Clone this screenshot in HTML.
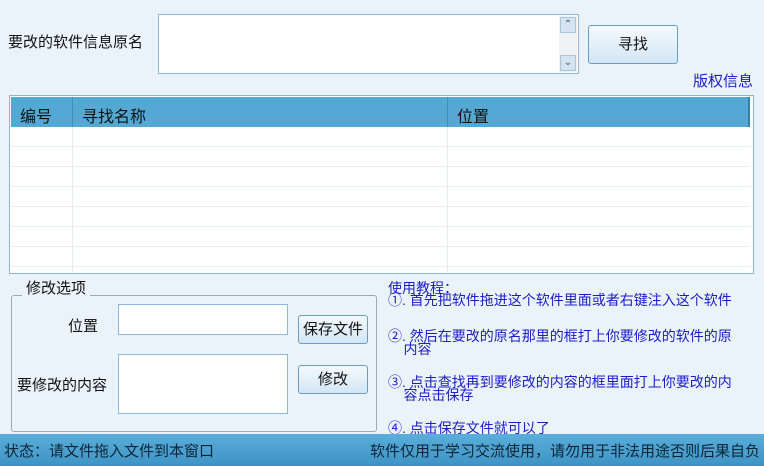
<!DOCTYPE html>
<html><head><meta charset="utf-8"><style>
*{margin:0;padding:0;box-sizing:border-box}
body{width:764px;height:466px;background:#ebf3fa;font-family:"Liberation Sans","Noto Sans CJK SC",sans-serif;font-size:15px;color:#111;position:relative;overflow:hidden}
.a{position:absolute}
.btn{position:absolute;border:1px solid #6a9cc4;border-radius:3px;background:linear-gradient(#f4f9fd,#d3e6f5);text-align:center;font-size:15px}
.inp{position:absolute;background:#fff;border:1px solid #8db8d6}
.blue{color:#1c1cc8}
</style></head><body>
<div class="a" style="left:8px;top:31px">要改的软件信息原名</div>
<div class="inp" style="left:158px;top:14px;width:421px;height:60px"></div>
<div class="a" style="left:559px;top:16px;width:18px;height:56px;background:#eef2f5"></div>
<div class="a" style="left:560px;top:17px;width:16px;height:16px;background:#d4e4f0;border:1px solid #aac4d8;font-size:10px;text-align:center;line-height:14px;color:#456">&#8963;</div>
<div class="a" style="left:560px;top:55px;width:16px;height:16px;background:#d4e4f0;border:1px solid #aac4d8;font-size:10px;text-align:center;line-height:14px;color:#456">&#8964;</div>
<div class="btn" style="left:588px;top:25px;width:90px;height:39px;line-height:37px">寻找</div>
<div class="a blue" style="left:693px;top:70px;font-size:15px">版权信息</div>
<div class="a" style="left:9px;top:95px;width:745px;height:179px;background:#fff;border:1px solid #8fb6cc"></div>
<div class="a" style="left:11px;top:97px;width:739px;height:30px;background:#53a9d3"></div>
<div class="a" style="left:72px;top:97px;width:1px;height:175px;background:#e4ecf0"></div>
<div class="a" style="left:447px;top:97px;width:1px;height:175px;background:#e4ecf0"></div>
<div class="a" style="left:72px;top:97px;width:1px;height:30px;background:#3e8fb8"></div>
<div class="a" style="left:447px;top:97px;width:1px;height:30px;background:#3e8fb8"></div>
<div class="a" style="left:748px;top:97px;width:2px;height:30px;background:#3a7ea3"></div>
<div class="a" style="left:20px;top:103px;font-size:16px">编号</div>
<div class="a" style="left:82px;top:103px;font-size:16px">寻找名称</div>
<div class="a" style="left:457px;top:103px;font-size:16px">位置</div>
<div class="a" style="left:11px;top:146px;width:739px;height:1px;background:#eaeef0"></div>
<div class="a" style="left:11px;top:166px;width:739px;height:1px;background:#eaeef0"></div>
<div class="a" style="left:11px;top:186px;width:739px;height:1px;background:#eaeef0"></div>
<div class="a" style="left:11px;top:206px;width:739px;height:1px;background:#eaeef0"></div>
<div class="a" style="left:11px;top:226px;width:739px;height:1px;background:#eaeef0"></div>
<div class="a" style="left:11px;top:246px;width:739px;height:1px;background:#eaeef0"></div>
<div class="a" style="left:11px;top:266px;width:739px;height:1px;background:#eaeef0"></div>
<div class="a" style="left:11px;top:295px;width:366px;height:137px;border:1px solid #9aaab6;border-radius:3px"></div>
<div class="a" style="left:22px;top:277px;padding:0 4px;background:#ebf3fa">修改选项</div>
<div class="a" style="left:68px;top:315px">位置</div>
<div class="inp" style="left:118px;top:304px;width:170px;height:31px"></div>
<div class="btn" style="left:298px;top:315px;width:70px;height:29px;line-height:27px">保存文件</div>
<div class="a" style="left:17px;top:374px">要修改的内容</div>
<div class="inp" style="left:118px;top:354px;width:170px;height:60px"></div>
<div class="btn" style="left:298px;top:365px;width:70px;height:29px;line-height:27px">修改</div>
<div class="a blue" style="left:388px;top:282px;font-size:14px;line-height:12px;width:372px">使用教程：<br>①. 首先把软件拖进这个软件里面或者右键注入这个软件</div>
<div class="a blue" style="left:388px;top:330px;font-size:14px;line-height:13px;width:372px">②. 然后在要改的原名那里的框打上你要修改的软件的原<br>&nbsp;&nbsp;&nbsp;&nbsp;内容</div>
<div class="a blue" style="left:388px;top:376px;font-size:14px;line-height:13px;width:372px">③. 点击查找再到要修改的内容的框里面打上你要改的内<br>&nbsp;&nbsp;&nbsp;&nbsp;容点击保存</div>
<div class="a blue" style="left:388px;top:418px;font-size:14px">④. 点击保存文件就可以了</div>
<div class="a" style="left:0;top:434px;width:764px;height:32px;background:linear-gradient(#5aaedb,#3d93c4);color:#0d2436;font-size:15px">
<span class="a" style="left:4px;top:6px">状态：请文件拖入文件到本窗口</span>
<span class="a" style="right:4px;top:6px;white-space:nowrap">软件仅用于学习交流使用，请勿用于非法用途否则后果自负</span></div>
</body></html>
